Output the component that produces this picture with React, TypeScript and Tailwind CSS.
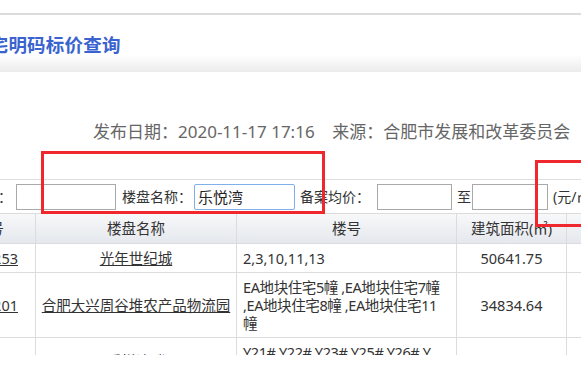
import React from 'react';

const font = { fontFamily: '"Noto Sans", "Noto Sans CJK SC", sans-serif' };

export default function App() {
  return (
    <div
      className="relative w-[581px] h-[373px] overflow-hidden bg-white text-[#333]"
      style={font}
    >
      <div className="h-[13px]" />

      {/* 标题栏 */}
      <div className="h-[59px] border-t-2 border-[#dcdcdc] bg-linear-to-b from-white from-70% to-[#ebebeb] flex items-center pt-[3px]">
        <h1 className="ml-[-29px] whitespace-nowrap text-[18.5px] font-bold text-[#3a63d0] tracking-[0.2px]">
          住宅明码标价查询
        </h1>
      </div>

      {/* 发布信息 */}
      <div className="mt-[50px] pl-[93px] whitespace-nowrap text-[17px] leading-[20px] text-[#666]">
        发布日期：2020-11-17 17:16&nbsp;&nbsp;&nbsp; 来源：合肥市发展和改革委员会
      </div>

      {/* 查询条件 */}
      <div className="mt-[37px] h-[34px] border-t border-[#dedede] flex items-center whitespace-nowrap text-[14px]">
        <span className="ml-[-58px] w-[70px] shrink-0">预售证号：</span>
        <input
          readOnly
          className="ml-[4px] w-[100px] h-[26px] shrink-0 border border-[#a9a9a9] outline-none"
        />
        <span className="ml-[6px] w-[70px] shrink-0">楼盘名称：</span>
        <input
          readOnly
          value="乐悦湾"
          className="ml-[2px] w-[101px] h-[26px] shrink-0 border border-[#7fb0ea] rounded-[2px] px-[3px] text-[15px] text-[#222] outline-none"
        />
        <span className="ml-[5px] w-[70px] shrink-0">备案均价：</span>
        <input
          readOnly
          className="ml-[7px] w-[75px] h-[26px] shrink-0 border border-[#a9a9a9] outline-none"
        />
        <span className="ml-[5px] w-[15px] shrink-0">至</span>
        <input
          readOnly
          className="ml-[0px] w-[76px] h-[26px] shrink-0 border border-[#a9a9a9] outline-none"
        />
        <span className="ml-[5px] shrink-0">(元/㎡)</span>
      </div>

      {/* 结果表格 */}
      <div className="h-[142px] overflow-hidden">
        <table className="ml-[-60px] w-[776px] table-fixed border-collapse text-[14.5px]">
          <colgroup>
            <col className="w-[95px]" />
            <col className="w-[201px]" />
            <col className="w-[220px]" />
            <col className="w-[110px]" />
            <col className="w-[150px]" />
          </colgroup>
          <thead>
            <tr className="bg-linear-to-b from-[#f7f8fa] to-[#e4e7ec]">
              <th className="border border-[#dcdcdc] py-[5px] pr-[31px] leading-[19px] font-normal text-right whitespace-nowrap overflow-hidden">
                许可证号
              </th>
              <th className="border border-[#dcdcdc] py-[5px] leading-[19px] font-normal">楼盘名称</th>
              <th className="border border-[#dcdcdc] py-[5px] leading-[19px] font-normal">楼号</th>
              <th className="border border-[#dcdcdc] py-[5px] leading-[19px] font-normal whitespace-nowrap">
                建筑面积(㎡)
              </th>
              <th className="border border-[#dcdcdc] py-[5px] leading-[19px] font-normal whitespace-nowrap">
                备案均价(元/㎡)
              </th>
            </tr>
          </thead>
          <tbody className="leading-[18px]">
            <tr>
              <td className="border border-[#dcdcdc] py-[5px] pr-[17px] text-right underline">2020253</td>
              <td className="border border-[#dcdcdc] py-[5px] text-center underline">光年世纪城</td>
              <td className="border border-[#dcdcdc] py-[5px] pl-[6px] whitespace-nowrap">2,3,10,11,13</td>
              <td className="border border-[#dcdcdc] py-[5px] text-center">50641.75</td>
              <td className="border border-[#dcdcdc] py-[5px]" />
            </tr>
            <tr>
              <td className="border border-[#dcdcdc] py-[5px] pr-[17px] text-right underline">2020201</td>
              <td className="border border-[#dcdcdc] py-[5px] text-center underline whitespace-nowrap">
                合肥大兴周谷堆农产品物流园
              </td>
              <td className="border border-[#dcdcdc] py-[5px] pl-[6px] whitespace-nowrap overflow-hidden tracking-[-0.4px]">
                EA地块住宅5幢 ,EA地块住宅7幢
                <br />
                ,EA地块住宅8幢 ,EA地块住宅11
                <br />幢
              </td>
              <td className="border border-[#dcdcdc] py-[5px] text-center">34834.64</td>
              <td className="border border-[#dcdcdc] py-[5px]" />
            </tr>
            <tr>
              <td className="border border-[#dcdcdc] py-[5px] pr-[17px] text-right underline">2020188</td>
              <td className="border border-[#dcdcdc] py-[5px] text-center underline">乐悦湾畔</td>
              <td className="border border-[#dcdcdc] py-[5px] pl-[6px] whitespace-nowrap overflow-hidden tracking-[-0.4px]">
                Y21# Y22# Y23# Y25# Y26# Y
                <br />
                27# Y28#
              </td>
              <td className="border border-[#dcdcdc] py-[5px] text-center">41236.18</td>
              <td className="border border-[#dcdcdc] py-[5px]" />
            </tr>
          </tbody>
        </table>
      </div>

      {/* 红色标注框 */}
      <div className="absolute left-[41px] top-[151px] w-[284px] h-[63px] border-[3px] border-[#f0282d]" />
      <div className="absolute left-[535px] top-[160px] w-[60px] h-[67px] border-[3px] border-[#f0282d]" />
    </div>
  );
}
